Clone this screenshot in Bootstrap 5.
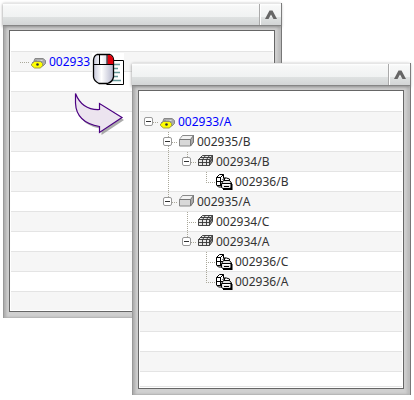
<!DOCTYPE html>
<html lang="en">
<head>
<meta charset="utf-8">
<meta name="viewport" content="width=device-width, initial-scale=1">
<title>Structure tree</title>
<link href="https://cdn.jsdelivr.net/npm/bootstrap@5.3.0/dist/css/bootstrap.min.css" rel="stylesheet">
<style>
body { background: #fff; font-family: "Noto Sans", sans-serif; font-size: 12px; line-height: 20px; color: #333; }
.stage { padding: 3px; }
.win { grid-area: 1 / 1; background: #d0d0d0; border-right: 1px solid #777; box-shadow: inset 1px 0 #999, inset 3px 0 3px #aaa, inset -3px 0 3px #bbb, inset 0 -1px #c2c2c2; }
.win-back { margin-right: 129px; }
.win-front { margin-left: 129px; margin-top: 60px; z-index: 2; }
.win-bar { height: 23px; border-top: 1px solid #e6e6e6; border-bottom: 1px solid #858585; background: linear-gradient(#fff 0, #f7f8f8 2px, #f0f2f2 13px, #dfe2e2 13px, #d3d5d6 21px); box-shadow: 0 1px 3px #888; }
.win-up { width: 22px; padding: 0; border: 0; border-left: 1px solid #aaa; box-shadow: inset 1px 0 #fff; background: none; }
.win-body { padding: 4px 6px 6px; }
.pane { border: 1px solid #666; padding: 1px; background: #fff; }
.tree { background: repeating-linear-gradient(#fff 0 19px, #e4e4e4 19px 20px, #f6f6f6 20px 39px, #e4e4e4 39px 40px); padding-top: 20px; }
.win-back .tree { min-height: 278px; }
.win-front .tree { min-height: 295px; border-bottom: 1px solid #e4e4e4; }
.tree li { height: 20px; }
.tree a { color: #333; text-decoration: none; }
.tree .top-item { color: #00f; }
.cell { width: 19px; height: 20px; flex: none; }
.v-full { background: repeating-linear-gradient(#aaa89a 0 1px, transparent 1px 2px) 9px 0 / 1px 20px no-repeat; }
.h-dots { background: repeating-linear-gradient(90deg, #aaa89a 0 1px, transparent 1px 2px) 9px 10px / 10px 1px no-repeat; }
.elbow { background: repeating-linear-gradient(#aaa89a 0 1px, transparent 1px 2px) 9px 0 / 1px 10px no-repeat, repeating-linear-gradient(90deg, #aaa89a 0 1px, transparent 1px 2px) 9px 10px / 10px 1px no-repeat; }
.tee { background: repeating-linear-gradient(#aaa89a 0 1px, transparent 1px 2px) 9px 0 / 1px 20px no-repeat, repeating-linear-gradient(90deg, #aaa89a 0 1px, transparent 1px 2px) 9px 10px / 10px 1px no-repeat; }
.toggle { width: 9px; height: 9px; margin: 5px 0 0 4px; padding: 0; border: 1px solid #999; border-radius: 2px; background: linear-gradient(#333, #333) 1px 3px / 5px 1px no-repeat #fff; display: block; }
.mouse-mark { left: 91px; top: 52px; z-index: 1; }
.arrow-mark { left: 73px; top: 91px; z-index: 1; }
</style>
<script src="https://cdn.jsdelivr.net/npm/bootstrap@5.3.0/dist/js/bootstrap.bundle.min.js"></script>
</head>
<body>
<svg class="d-none" aria-hidden="true">
  <symbol id="part" viewBox="0 0 19 20">
    <path d="M5 6.500h8l2.500 2v3l-2.500 2.500H9L4 9z" fill="#aaa" stroke="#888"/>
    <path d="M7 8.500h5.500" stroke="#ddd"/>
    <path d="M4.500 9.500h6l2 2v2l-2 2.500h-6l-3-2.500v-1.500z" fill="#ff0" stroke="#a0a040"/>
    <path d="M2 11l2.500-2h6l1.500 1.500" fill="none" stroke="#888"/>
    <circle cx="7.500" cy="12.500" r="1.300" fill="#333"/>
  </symbol>
  <symbol id="box" viewBox="0 0 19 20">
    <path d="M1.500 7.500l3-4h11v6.500l-3 4h-11z" fill="#d8d8d8" stroke="#888"/>
    <path d="M2 7l3-3H15l-2.500 3z" fill="#f2f2f2"/>
    <path d="M12.500 7.500l3-4v6.500l-3 4z" fill="#aaa" stroke="#777"/>
    <path d="M1.500 7.500h11" stroke="#777"/>
  </symbol>
  <symbol id="gridbox" viewBox="0 0 19 20">
    <path d="M1.500 7.500l4-4h10v6l-3 4h-11z" fill="#e4e4e4"/>
    <path d="M12.500 7.500l3-4v6l-3 4z" fill="#888"/>
    <path d="M1.500 7.500l4-4h10v6l-3 4h-11zM1.500 7.500h11l3-4M12.500 7.500v6M5.500 13.500v-6l3-4M9.500 13.500v-6l3-4M1.500 10.500h11l3-4M3.500 5.500h10.500" fill="none" stroke="#333" stroke-width=".9"/>
  </symbol>
  <symbol id="assembly" viewBox="0 0 19 20">
    <path d="M.5 5.500l3-3h4v3.500h3l3 1v4l-5 4h-6l-2-2z" fill="#fff" stroke="#000"/>
    <path d="M.5 5.500h4l3-3M4.500 5v8M.5 9.500h7M6.500 7.500l3-1.500M1 13.500h4M8.500 6v4" fill="none" stroke="#000"/>
    <path d="M5.500 11.500l2-3h6l2 2.500v4.500l-1.500 1H7l-1.500-1z" fill="#e4e4e4" stroke="#000"/>
    <path d="M6 11.500h9M8 14.500h5" stroke="#000"/>
    <path d="M7 12.500h7" stroke="#fff"/>
    <path d="M7 17h8.500v-5" fill="none" stroke="#000" stroke-width="2"/>
  </symbol>
  <symbol id="up" viewBox="0 0 14 11">
    <path d="M1 10L5.500 1.500h3L13 10H9.500L7 5.500 4.500 10z" fill="#666"/>
  </symbol>
</svg>

<main class="stage d-grid position-relative">
  <section class="win win-back align-self-start" aria-label="Source item">
    <div class="win-bar d-flex justify-content-end">
      <button class="win-up d-flex align-items-center justify-content-center" type="button" aria-label="Collapse"><svg width="14" height="11"><use href="#up"/></svg></button>
    </div>
    <div class="win-body"><div class="pane">
      <ul class="tree list-unstyled mb-0">
        <li class="d-flex"><span class="cell h-dots"></span><svg class="cell"><use href="#part"/></svg><a class="top-item" href="#">002933</a></li>
      </ul>
    </div></div>
  </section>

  <svg class="mouse-mark position-absolute" width="35" height="34" aria-hidden="true">
    <defs><linearGradient id="mg"><stop offset="0" stop-color="#c8cadc"/><stop offset=".4" stop-color="#fff"/><stop offset="1" stop-color="#b4b6cc"/></linearGradient></defs>
    <path d="M1 1h32v32H1z" fill="#fff"/>
    <path d="M16.500 8.500h16v24h-17" fill="#fff" stroke="#000"/>
    <path d="M23 12.500h6M23 16.500h4M23 20.500h6M23 24.500h4M21 28.500h9" stroke="#699" stroke-width="1.500"/>
    <path d="M6 2.500h13q3 1 3.500 5V25q-1 5-6 6.500H8Q3 29 2.500 25V8Q3 3.500 6 2.500z" fill="url(#mg)" stroke="#000" stroke-width="1.300"/>
    <path d="M16.500 3H19q3 1 3.300 5v4.500h-5.800z" fill="#e0000c"/>
    <path d="M2.500 12.500h20M8.500 2.500v10M16 2.500v10" stroke="#000"/>
  </svg>
  <svg class="arrow-mark position-absolute" width="54" height="48" aria-hidden="true">
    <path d="M4.500 14C5 30 16 36 28.500 37.500V44L51 29 28.500 14.500V21C17 21 8 17 4.500 14z" fill="#888" opacity=".7"/>
    <path d="M2.500 2.500C7 14 15 19 26.500 18.500V12.500L49 26.500 26.500 41.500V35.500C12 33 3 26 2.500 12z" fill="#ece4ef" stroke="#4b0082" stroke-width="1.200"/>
  </svg>

  <section class="win win-front align-self-start" aria-label="Expanded structure">
    <div class="win-bar d-flex justify-content-end">
      <button class="win-up d-flex align-items-center justify-content-center" type="button" aria-label="Collapse"><svg width="14" height="11"><use href="#up"/></svg></button>
    </div>
    <div class="win-body"><div class="pane">
      <ul class="tree list-unstyled mb-0">
        <li class="d-flex"><span class="cell h-dots"><button class="toggle" type="button" aria-label="Collapse 002933/A"></button></span><svg class="cell"><use href="#part"/></svg><a class="top-item" href="#">002933/A</a></li>
        <li class="d-flex"><span class="cell"></span><span class="cell tee"><button class="toggle" type="button" aria-label="Collapse 002935/B"></button></span><svg class="cell"><use href="#box"/></svg><a href="#">002935/B</a></li>
        <li class="d-flex"><span class="cell"></span><span class="cell v-full"></span><span class="cell elbow"><button class="toggle" type="button" aria-label="Collapse 002934/B"></button></span><svg class="cell"><use href="#gridbox"/></svg><a href="#">002934/B</a></li>
        <li class="d-flex"><span class="cell"></span><span class="cell v-full"></span><span class="cell"></span><span class="cell elbow"></span><svg class="cell"><use href="#assembly"/></svg><a href="#">002936/B</a></li>
        <li class="d-flex"><span class="cell"></span><span class="cell elbow"><button class="toggle" type="button" aria-label="Collapse 002935/A"></button></span><svg class="cell"><use href="#box"/></svg><a href="#">002935/A</a></li>
        <li class="d-flex"><span class="cell"></span><span class="cell"></span><span class="cell tee"></span><svg class="cell"><use href="#gridbox"/></svg><a href="#">002934/C</a></li>
        <li class="d-flex"><span class="cell"></span><span class="cell"></span><span class="cell elbow"><button class="toggle" type="button" aria-label="Collapse 002934/A"></button></span><svg class="cell"><use href="#gridbox"/></svg><a href="#">002934/A</a></li>
        <li class="d-flex"><span class="cell"></span><span class="cell"></span><span class="cell"></span><span class="cell tee"></span><svg class="cell"><use href="#assembly"/></svg><a href="#">002936/C</a></li>
        <li class="d-flex"><span class="cell"></span><span class="cell"></span><span class="cell"></span><span class="cell elbow"></span><svg class="cell"><use href="#assembly"/></svg><a href="#">002936/A</a></li>
      </ul>
    </div></div>
  </section>
</main>
</body>
</html>
